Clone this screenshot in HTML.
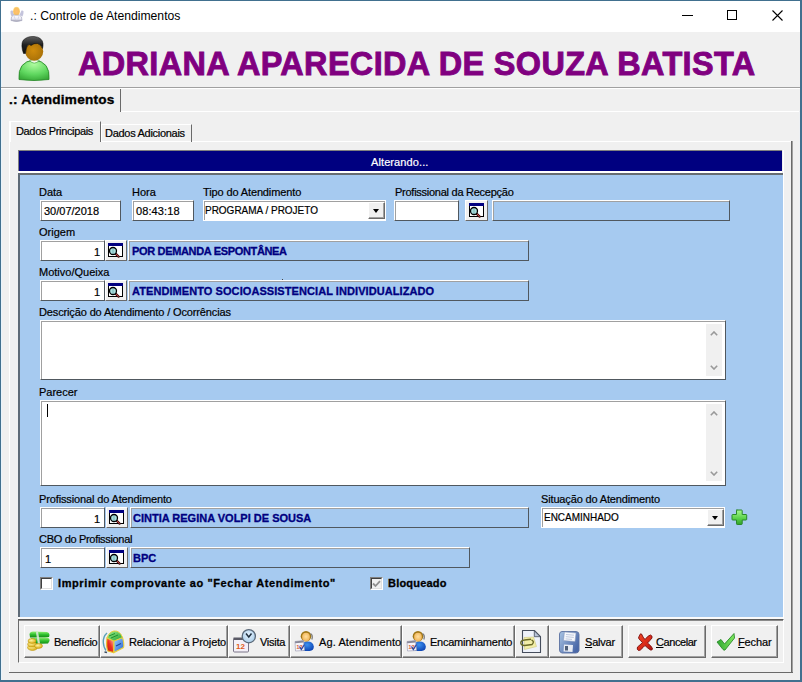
<!DOCTYPE html>
<html><head><meta charset="utf-8">
<style>
*{box-sizing:border-box;margin:0;padding:0}
html,body{width:802px;height:682px;overflow:hidden;background:#f0f0f0;font-family:"Liberation Sans",sans-serif;font-size:11px;color:#000}
.a{position:absolute}
svg{position:absolute;overflow:visible}
.t{position:absolute;white-space:nowrap;line-height:1}
.l{position:absolute;white-space:nowrap;font-size:11px;line-height:13px;color:#000;-webkit-text-stroke:0.2px currentColor}
.ed{position:absolute;background:#fff;border-top:1px solid #fff;border-left:1px solid #fff;border-right:1px solid #50585f;border-bottom:1px solid #50585f}
.ed::before{content:"";position:absolute;left:0;top:0;right:0;bottom:0;border-top:1px solid #a0a0a0;border-left:1px solid #a0a0a0}
.dp{position:absolute;background:#a6caf0;border-top:1px solid #fff;border-left:1px solid #fff;border-right:1px solid #50585f;border-bottom:1px solid #50585f}
.dp::before{content:"";position:absolute;left:0;top:0;right:0;bottom:0;border-top:1px solid #a0a0a0;border-left:1px solid #a0a0a0}
.cb{position:absolute;background:#fff;border:1px solid #fff}
.cb::before{content:"";position:absolute;left:0;top:0;right:0;bottom:0;border-top:1px solid #a0a0a0;border-left:1px solid #a0a0a0}
.bt{position:absolute;background:#f0f0f0;border-top:1px solid #fff;border-left:1px solid #fff;border-right:1px solid #6a6a6a;border-bottom:1px solid #6a6a6a}
.bb{position:absolute;background:#f0f0f0;border-top:1px solid #fff;border-left:1px solid #fff;border-right:1px solid #6a6a6a;border-bottom:1px solid #6a6a6a}
.bb::after{content:"";position:absolute;left:0;top:0;right:0;bottom:0;border-right:1px solid #a0a0a0;border-bottom:1px solid #a0a0a0}
.dt{position:absolute;font-weight:bold;color:#000080;font-size:11px;white-space:nowrap;line-height:13px;-webkit-text-stroke:0.3px #000080}
.u{text-decoration:underline}
</style></head><body>
<!-- defs -->
<svg width="0" height="0" style="left:0;top:0">
<defs>
<symbol id="mag" viewBox="0 0 17 16">
  <rect x="0.5" y="0.5" width="14" height="13" fill="#fff" stroke="#000" stroke-width="1"/>
  <rect x="0" y="0" width="15" height="3" fill="#000080"/>
  <path d="M7.6 10.6 L10.6 13.6" stroke="#401010" stroke-width="2.2" stroke-linecap="round"/>
  <path d="M7.9 10.9 L10.3 13.3" stroke="#c04040" stroke-width="1" stroke-linecap="round"/>
  <circle cx="5" cy="8" r="3.5" fill="#a8dede" stroke="#000" stroke-width="1.3"/>
  <path d="M5 5.5 V10.5" stroke="#60a0a0" stroke-width="0.6"/>
</symbol>
<symbol id="chev" viewBox="0 0 8 5">
  <path d="M0.8 4.2 L4 1 L7.2 4.2" fill="none" stroke="#999" stroke-width="1.6"/>
</symbol>
<symbol id="agent" viewBox="0 0 22 22">
  <defs>
    <radialGradient id="hf" cx="0.5" cy="0.45" r="0.6"><stop offset="0" stop-color="#ffe0a0"/><stop offset="1" stop-color="#f0b050"/></radialGradient>
    <radialGradient id="bl" cx="0.45" cy="0.35" r="0.7"><stop offset="0" stop-color="#3c90f0"/><stop offset="1" stop-color="#0a40b0"/></radialGradient>
  </defs>
  <path d="M7.5 19 Q7 12.5 12.5 11.5 Q19 11 19.8 16.5 Q20 20.5 15.5 21 L9 21 Z" fill="url(#bl)"/>
  <ellipse cx="12" cy="6.3" rx="5.3" ry="5.3" fill="#a07818"/>
  <ellipse cx="12" cy="7" rx="3.9" ry="4.2" fill="url(#hf)"/>
  <path d="M16.5 3.5 Q19.3 5.5 17.8 9.5" fill="none" stroke="#808080" stroke-width="1.3"/>
  <path d="M1 11.5 L9.5 10.5 L10.5 20.5 L1.5 21 Z" fill="#f6f4fa" stroke="#a0a0b8" stroke-width="0.7"/>
  <path d="M1 11.5 L9.5 10.5 L9.7 12.5 L1.2 13.3 Z" fill="#888898"/>
  <text x="2.2" y="18.5" font-size="6" font-family="Liberation Sans" font-weight="bold" fill="#d86040">12</text>
  <path d="M5.5 16.5 L7.3 19.5 L10.5 14.5" fill="none" stroke="#2848a0" stroke-width="1.2"/>
</symbol>
</defs>
</svg>

<!-- window border -->
<div class="a" style="left:0;top:0;width:802px;height:682px;border:1px solid #41708f;border-right-width:2px;border-bottom-width:2px"></div>
<div class="a" style="left:1px;top:1px;width:1px;height:679px;background:#e8f4fc"></div>
<!-- title bar -->
<div class="a" style="left:1px;top:1px;width:799px;height:31px;background:#fff"></div>
<div class="t" style="left:30px;top:10px;font-size:12.2px;color:#000">.: Controle de Atendimentos</div>
<svg style="left:9px;top:6px" width="16" height="17" viewBox="9 6 16 17">
  <defs><radialGradient id="th" cx="0.5" cy="0.55" r="0.6"><stop offset="0" stop-color="#ffc070"/><stop offset="0.7" stop-color="#f8c060"/><stop offset="1" stop-color="#fff0b0"/></radialGradient>
  <linearGradient id="tb" x1="0" y1="0" x2="0" y2="1"><stop offset="0" stop-color="#ffffff"/><stop offset="0.6" stop-color="#e8e8f4"/><stop offset="1" stop-color="#9898a8"/></linearGradient></defs>
  <path d="M10.5 11.5 Q11 10 12.5 10.5 L14.5 15 L11.5 16.5 Q10.3 14 10.5 11.5Z" fill="#c4c4dc"/>
  <path d="M23.5 11.5 Q23 10 21.5 10.5 L19.5 15 L22.5 16.5 Q23.7 14 23.5 11.5Z" fill="#c4c4dc"/>
  <ellipse cx="16.5" cy="11.2" rx="3.4" ry="4.4" fill="url(#th)"/>
  <path d="M11 20.5 Q10.8 16 13.5 15.2 L19.5 15.2 Q22.2 16 22 20.5 Q16.5 22.5 11 20.5Z" fill="url(#tb)" stroke="#a0a0b8" stroke-width="0.6"/>
  <path d="M14 16 L15.5 20 M19 16 L18 19" stroke="#c8c8dc" stroke-width="0.6"/>
</svg>
<!-- window controls -->
<div class="a" style="left:682px;top:15px;width:11px;height:1px;background:#000"></div>
<div class="a" style="left:727px;top:10px;width:10px;height:10px;border:1px solid #000"></div>
<svg style="left:772px;top:10px" width="11" height="11" viewBox="0 0 11 11"><path d="M0.5 0.5 L10.5 10.5 M10.5 0.5 L0.5 10.5" stroke="#000" stroke-width="1.1"/></svg>

<!-- header avatar -->
<svg style="left:10px;top:32px" width="44" height="54" viewBox="10 32 44 54">
  <defs>
    <radialGradient id="gb" cx="0.5" cy="0.2" r="0.9"><stop offset="0" stop-color="#b0fca0"/><stop offset="0.55" stop-color="#60d860"/><stop offset="1" stop-color="#30a030"/></radialGradient>
    <radialGradient id="gf" cx="0.45" cy="0.45" r="0.6"><stop offset="0" stop-color="#d08c0c"/><stop offset="1" stop-color="#a87008"/></radialGradient>
    <linearGradient id="gh" x1="0" y1="0" x2="0" y2="1"><stop offset="0" stop-color="#606060"/><stop offset="0.5" stop-color="#202020"/><stop offset="1" stop-color="#101010"/></linearGradient>
  </defs>
  <path d="M19 79.5 Q17.5 61.5 34 60 Q50.5 61.5 49 79.5 Q34 81.5 19 79.5Z" fill="url(#gb)" stroke="#2c8c2c" stroke-width="0.9"/>
  <path d="M29.5 60.3 Q34 66 39.5 60.3 Q34 59 29.5 60.3Z" fill="#f0fae8" stroke="#3a9a3a" stroke-width="0.6"/>
  <ellipse cx="34.2" cy="51.5" rx="9" ry="9.3" fill="url(#gf)"/>
  <path d="M23.5 53.5 Q20.5 45 23 40.5 Q27 36 34 36.5 Q42 37 43 43.5 Q43.2 46 42.5 48.5 Q41 44.5 37.5 43.5 Q34 43 31 45.5 Q29.5 44 28 45 Q26 47 25.5 53.5 Z" fill="url(#gh)" stroke="#000" stroke-width="0.5"/>
</svg>
<div class="t" style="left:78px;top:48px;font-size:32.4px;font-weight:bold;color:#800080;letter-spacing:0.38px;-webkit-text-stroke:0.9px #800080">ADRIANA APARECIDA DE SOUZA BATISTA</div>
<div class="a" style="left:1px;top:87px;width:799px;height:1px;background:#a0a0a0"></div>
<div class="a" style="left:1px;top:88px;width:799px;height:1px;background:#fff"></div>

<!-- outer page control -->
<div class="a" style="left:9px;top:111px;width:791px;height:562px;border-top:1px solid #fff"></div>
<div class="a" style="left:9px;top:121px;width:1px;height:552px;background:#fff"></div>
<div class="a" style="left:792px;top:141px;width:1px;height:532px;background:#a0a0a0"></div>
<div class="a" style="left:9px;top:672px;width:784px;height:1px;background:#6a6a6a"></div>
<div class="a" style="left:799px;top:111px;width:1px;height:569px;background:#eef0f3"></div>
<div class="a" style="left:2px;top:89px;width:119px;height:23px;background:#f0f0f0;border-right:1px solid #6a6a6a"></div>
<div class="t" style="left:9px;top:93px;font-size:13.6px;font-weight:bold;letter-spacing:0.22px;-webkit-text-stroke:0.35px #000">.: Atendimentos</div>

<!-- inner page control -->
<div class="a" style="left:11px;top:141px;width:781px;height:1px;background:#fff"></div>
<div class="a" style="left:101px;top:124px;width:91px;height:18px;border-left:1px solid #fff;border-top:1px solid #fff;border-right:1px solid #6a6a6a"></div>
<div class="l" style="left:105px;top:127px;letter-spacing:-0.29px">Dados Adicionais</div>
<div class="a" style="left:10px;top:121px;width:91px;height:21px;background:#f0f0f0;border-left:1px solid #fff;border-top:1px solid #fff;border-right:1px solid #6a6a6a"></div>
<div class="l" style="left:16px;top:125px;letter-spacing:-0.35px">Dados Principais</div>
<div class="a" style="left:791px;top:141px;width:1px;height:531px;background:#6a6a6a"></div>

<!-- navy bar -->
<div class="a" style="left:18px;top:150px;width:764px;height:21px;background:#000080;border-left:1px solid #808080;border-top:1px solid #808080"></div>
<div class="l" style="left:371px;top:156px;color:#fff;letter-spacing:0.1px">Alterando...</div>
<div class="a" style="left:18px;top:171px;width:764px;height:2px;background:#fff"></div>

<!-- blue panel -->
<div class="a" style="left:18px;top:173px;width:765px;height:445px;background:#a6caf0;border-left:2px solid #5e6a76;border-top:2px solid #666c72"></div>
<div class="a" style="left:18px;top:617px;width:765px;height:2px;background:#fafafa"></div>
<div class="a" style="left:783px;top:150px;width:1px;height:469px;background:#fff"></div>
<!-- row 1 -->
<div class="l" style="left:39px;top:186px">Data</div>
<div class="ed" style="left:40px;top:200px;width:81px;height:21px"></div>
<div class="l" style="left:44px;top:205px">30/07/2018</div>
<div class="l" style="left:132px;top:186px">Hora</div>
<div class="ed" style="left:132px;top:200px;width:62px;height:21px"></div>
<div class="l" style="left:136px;top:205px;letter-spacing:0.1px">08:43:18</div>
<div class="l" style="left:203px;top:186px;letter-spacing:-0.124px">Tipo do Atendimento</div>
<div class="cb" style="left:203px;top:200px;width:183px;height:21px"></div>
<div class="l" style="left:205px;top:204px;transform:scaleX(0.907);transform-origin:0 0">PROGRAMA / PROJETO</div>
<div class="bb" style="left:368px;top:202px;width:17px;height:17px"></div>
<div class="a" style="left:373px;top:209px;width:0;height:0;border-left:3.5px solid transparent;border-right:3.5px solid transparent;border-top:4px solid #000"></div>
<div class="l" style="left:395px;top:186px;letter-spacing:-0.26px">Profissional da Recepção</div>
<div class="ed" style="left:394px;top:200px;width:65px;height:21px"></div>
<div class="bt" style="left:465px;top:200px;width:23px;height:21px"></div>
<svg style="left:469px;top:203px" width="17" height="16"><use href="#mag"/></svg>
<div class="dp" style="left:492px;top:200px;width:238px;height:21px"></div>

<!-- row 2 Origem -->
<div class="l" style="left:39px;top:226px">Origem</div>
<div class="ed" style="left:40px;top:240px;width:65px;height:21px"></div>
<div class="l" style="left:94px;top:246px">1</div>
<div class="bt" style="left:105px;top:240px;width:22px;height:21px"></div>
<svg style="left:108px;top:243px" width="17" height="16"><use href="#mag"/></svg>
<div class="dp" style="left:128px;top:240px;width:401px;height:21px"></div>
<div class="dt" style="left:132px;top:245px;letter-spacing:-0.339px">POR DEMANDA ESPONTÂNEA</div>

<!-- row 3 Motivo -->
<div class="l" style="left:39px;top:266px">Motivo/Queixa</div>
<div class="a" style="left:282px;top:279px;width:1px;height:1px;background:#444"></div>
<div class="ed" style="left:40px;top:280px;width:65px;height:21px"></div>
<div class="l" style="left:94px;top:286px">1</div>
<div class="bt" style="left:105px;top:280px;width:22px;height:21px"></div>
<svg style="left:108px;top:283px" width="17" height="16"><use href="#mag"/></svg>
<div class="dp" style="left:128px;top:280px;width:401px;height:21px"></div>
<div class="dt" style="left:132px;top:285px;letter-spacing:0.073px">ATENDIMENTO SOCIOASSISTENCIAL INDIVIDUALIZADO</div>

<!-- memo 1 -->
<div class="l" style="left:39px;top:306px;letter-spacing:-0.133px">Descrição do Atendimento / Ocorrências</div>
<div class="ed" style="left:40px;top:320px;width:686px;height:60px"></div>
<div class="a" style="left:706px;top:324px;width:16px;height:52px;background:#f0f0f0"></div>
<svg style="left:710px;top:331px" width="8" height="5"><use href="#chev"/></svg>
<svg style="left:710px;top:365px;transform:scaleY(-1)" width="8" height="5"><use href="#chev"/></svg>

<!-- memo 2 -->
<div class="l" style="left:39px;top:386px">Parecer</div>
<div class="ed" style="left:40px;top:400px;width:686px;height:86px"></div>
<div class="a" style="left:706px;top:404px;width:16px;height:77px;background:#f0f0f0"></div>
<svg style="left:710px;top:411px" width="8" height="5"><use href="#chev"/></svg>
<svg style="left:710px;top:471px;transform:scaleY(-1)" width="8" height="5"><use href="#chev"/></svg>
<div class="a" style="left:47px;top:404px;width:1px;height:13px;background:#000"></div>

<!-- prof atendimento -->
<div class="l" style="left:39px;top:493px;letter-spacing:-0.132px">Profissional do Atendimento</div>
<div class="ed" style="left:40px;top:507px;width:65px;height:21px"></div>
<div class="l" style="left:94px;top:513px">1</div>
<div class="bt" style="left:106px;top:507px;width:22px;height:21px"></div>
<svg style="left:109px;top:510px" width="17" height="16"><use href="#mag"/></svg>
<div class="dp" style="left:130px;top:507px;width:399px;height:21px"></div>
<div class="dt" style="left:133px;top:512px">CINTIA REGINA VOLPI DE SOUSA</div>

<div class="l" style="left:541px;top:493px;letter-spacing:-0.15px">Situação do Atendimento</div>
<div class="cb" style="left:541px;top:507px;width:184px;height:21px"></div>
<div class="l" style="left:544px;top:511px;transform:scaleX(0.907);transform-origin:0 0">ENCAMINHADO</div>
<div class="bb" style="left:707px;top:509px;width:17px;height:17px"></div>
<div class="a" style="left:712px;top:516px;width:0;height:0;border-left:3.5px solid transparent;border-right:3.5px solid transparent;border-top:4px solid #000"></div>
<svg style="left:731px;top:509px" width="17" height="17" viewBox="0 0 17 17">
  <defs><linearGradient id="pl" x1="0" y1="0" x2="0" y2="1"><stop offset="0" stop-color="#a8f890"/><stop offset="0.6" stop-color="#58d048"/><stop offset="1" stop-color="#30a028"/></linearGradient></defs>
  <path d="M5.5 1 H10.5 Q11.2 1 11.2 1.7 V5.5 H15 Q15.7 5.5 15.7 6.2 V10.3 Q15.7 11 15 11 H11.2 V14.8 Q11.2 15.5 10.5 15.5 H6.2 Q5.5 15.5 5.5 14.8 V11 H1.7 Q1 11 1 10.3 V6.2 Q1 5.5 1.7 5.5 H5.5 V1.7 Q5.5 1 6.2 1Z" fill="url(#pl)" stroke="#2a882a" stroke-width="1"/>
</svg>

<!-- CBO -->
<div class="l" style="left:39px;top:533px;letter-spacing:-0.314px">CBO do Profissional</div>
<div class="ed" style="left:40px;top:547px;width:65px;height:21px"></div>
<div class="l" style="left:45px;top:553px">1</div>
<div class="bt" style="left:106px;top:547px;width:22px;height:21px"></div>
<svg style="left:109px;top:550px" width="17" height="16"><use href="#mag"/></svg>
<div class="dp" style="left:130px;top:547px;width:340px;height:21px"></div>
<div class="dt" style="left:133px;top:552px">BPC</div>

<!-- checkboxes -->
<div class="a" style="left:40px;top:577px;width:13px;height:13px;background:#fff;border-top:1px solid #808080;border-left:1px solid #808080;border-right:1px solid #fff;border-bottom:1px solid #fff"></div>
<div class="a" style="left:41px;top:578px;width:11px;height:11px;border-top:1px solid #404040;border-left:1px solid #404040;border-right:1px solid #e0e0e0;border-bottom:1px solid #e0e0e0"></div>
<div class="t" style="left:58px;top:578px;font-size:11px;font-weight:bold;letter-spacing:0.6px;line-height:11px;-webkit-text-stroke:0.3px #000">Imprimir comprovante ao "Fechar Atendimento"</div>
<div class="a" style="left:370px;top:577px;width:13px;height:13px;background:#f0f0f0;border-top:1px solid #808080;border-left:1px solid #808080;border-right:1px solid #fff;border-bottom:1px solid #fff"></div>
<div class="a" style="left:371px;top:578px;width:11px;height:11px;border-top:1px solid #404040;border-left:1px solid #404040;border-right:1px solid #e0e0e0;border-bottom:1px solid #e0e0e0"></div>
<svg style="left:372px;top:580px" width="9" height="8" viewBox="0 0 9 8"><path d="M1 3.5 L3.5 6 L8 1.2" fill="none" stroke="#909090" stroke-width="1.8"/></svg>
<div class="t" style="left:388px;top:578px;font-size:11px;font-weight:bold;line-height:11px;letter-spacing:0.2px;-webkit-text-stroke:0.3px #000">Bloqueado</div>
<!-- button bar -->
<div class="a" style="left:18px;top:619px;width:766px;height:44px;border-left:1px solid #6a6a6a;border-top:1px solid #5a5a5a;border-right:1px solid #fff;border-bottom:1px solid #fff"></div>
<div class="a" style="left:19px;top:620px;width:764px;height:1px;background:#8a8a8a"></div>

<!-- 1 Beneficio -->
<div class="bb" style="left:24px;top:625px;width:76px;height:33px"></div>
<svg style="left:26px;top:629px" width="25" height="24" viewBox="26 629 25 24">
  <defs>
    <linearGradient id="mg" x1="0" y1="0" x2="0" y2="1"><stop offset="0" stop-color="#90f070"/><stop offset="0.5" stop-color="#30c030"/><stop offset="1" stop-color="#108a10"/></linearGradient>
    <radialGradient id="cg" cx="0.4" cy="0.35" r="0.7"><stop offset="0" stop-color="#fff4a0"/><stop offset="1" stop-color="#d8a810"/></radialGradient>
  </defs>
  <path d="M29.5 634 Q30 631.5 33 631.5 L47 632 Q49.5 632.5 49.5 635 L49 637 L45 637.5 L30 637.5 Z" fill="url(#mg)"/>
  <path d="M31 638 L47 637.5 Q50 638 49.5 641 L48 643.5 L33 644 Q30.5 643.5 31 641 Z" fill="url(#mg)"/>
  <path d="M37 632 L39 644" stroke="#d8e8d8" stroke-width="2.2" opacity="0.9"/>
  <ellipse cx="32.5" cy="647.5" rx="5" ry="3" fill="url(#cg)" stroke="#b89000" stroke-width="0.5"/>
  <ellipse cx="32" cy="644.3" rx="4.3" ry="2.6" fill="url(#cg)" stroke="#b89000" stroke-width="0.5"/>
  <ellipse cx="32" cy="641" rx="4" ry="2.4" fill="url(#cg)" stroke="#b89000" stroke-width="0.5"/>
  <ellipse cx="38.5" cy="646" rx="4" ry="2.4" fill="url(#cg)" stroke="#b89000" stroke-width="0.5"/>
</svg>
<div class="l" style="left:54px;top:636px;letter-spacing:-0.275px">Benefício</div>

<!-- 2 Relacionar -->
<div class="bb" style="left:100px;top:625px;width:128px;height:33px"></div>
<svg style="left:101px;top:629px" width="25" height="25" viewBox="101 629 25 25">
  <defs>
    <linearGradient id="rg" x1="1" y1="0" x2="0" y2="1"><stop offset="0" stop-color="#ffd0c0"/><stop offset="0.5" stop-color="#f03020"/><stop offset="1" stop-color="#c01010"/></linearGradient>
    <linearGradient id="gg2" x1="0" y1="0" x2="1" y2="1"><stop offset="0" stop-color="#a0f090"/><stop offset="1" stop-color="#20a030"/></linearGradient>
    <linearGradient id="bg2" x1="0" y1="0" x2="1" y2="1"><stop offset="0" stop-color="#a0d0ff"/><stop offset="1" stop-color="#2060d0"/></linearGradient>
  </defs>
  <path d="M107 633 Q103 636.5 103.3 642.5 Q103.8 648 106 650.5" fill="none" stroke="#5aa0b8" stroke-width="1.4"/>
  <path d="M107 638 Q106 648 108 651 L113.5 652.5 L114 641 Z" fill="url(#rg)" stroke="#e8c020" stroke-width="1.1"/>
  <path d="M114 641 L122.5 637.5 Q124.5 644 123.5 647.5 L114 652.5 Z" fill="url(#bg2)" stroke="#e8d040" stroke-width="1.1"/>
  <path d="M107 638 Q109 632 114 631 Q120 630.5 122.5 637.5 L114 641 Z" fill="url(#gg2)" stroke="#e8d040" stroke-width="1"/>
  <path d="M109 636 L115 633.5 M111 638 L118 635" stroke="#188a28" stroke-width="0.9"/>
  <path d="M116 646 L121 643.5" stroke="#18489a" stroke-width="1.2"/>
  <path d="M104.5 652 L107 652.5" stroke="#3a4a60" stroke-width="1.5"/>
</svg>
<div class="l" style="left:129px;top:636px;letter-spacing:-0.13px">Relacionar à Projeto</div>

<!-- 3 Visita -->
<div class="bb" style="left:228px;top:625px;width:62px;height:33px"></div>
<svg style="left:231px;top:628px" width="28" height="26" viewBox="231 628 28 26">
  <defs><radialGradient id="ck" cx="0.5" cy="0.4" r="0.6"><stop offset="0" stop-color="#e8f4ff"/><stop offset="1" stop-color="#a8cce8"/></radialGradient></defs>
  <rect x="233.5" y="638.5" width="15" height="13.5" rx="1" fill="#f4f0f8" stroke="#7a7488" stroke-width="1"/>
  <rect x="233.5" y="637.5" width="15" height="2.5" fill="#5a5a66"/>
  <text x="236" y="649" font-size="8" font-family="Liberation Sans" font-weight="bold" fill="#e05a20">12</text>
  <circle cx="248.8" cy="636.2" r="6.6" fill="url(#ck)" stroke="#5a6878" stroke-width="1.3"/>
  <path d="M246 633.5 L248.8 637 L251.5 633.5" fill="none" stroke="#203040" stroke-width="1.5"/>
</svg>
<div class="l" style="left:260px;top:636px;letter-spacing:-0.280px">Visita</div>

<!-- 4 Ag -->
<div class="bb" style="left:290px;top:625px;width:112px;height:33px"></div>
<svg style="left:294px;top:630px" width="22" height="22" viewBox="0 0 22 22"><use href="#agent"/></svg>
<div class="l" style="left:319px;top:636px;letter-spacing:0.107px">Ag. Atendimento</div>

<!-- 5 Encaminhamento -->
<div class="bb" style="left:402px;top:625px;width:113px;height:33px"></div>
<svg style="left:406px;top:630px" width="22" height="22" viewBox="0 0 22 22"><use href="#agent"/></svg>
<div class="l" style="left:430px;top:636px;letter-spacing:-0.243px">Encaminhamento</div>

<!-- 6 doc -->
<div class="bb" style="left:515px;top:625px;width:34px;height:33px"></div>
<svg style="left:519px;top:629px" width="24" height="25" viewBox="519 629 24 25">
  <path d="M522.5 630.5 H534.3 L540.5 636.7 V652.5 H522.5 Z" fill="#eef2fa" stroke="#454d5c" stroke-width="1.1" stroke-linejoin="round"/>
  <path d="M534.3 630.8 V636.7 H540.2 Z" fill="#b8c4d8" stroke="#454d5c" stroke-width="0.8"/>
  <path d="M524 637.5 L533.5 637 L536.5 646.5 L524.5 649.5 Z" fill="#f2eea8" stroke="#c8c070" stroke-width="0.5"/>
  <path d="M531.5 639.8 Q535 641.5 532 644.5 L524.5 645.5 Q520.5 645.3 520.8 642.5 Q521.2 640.2 524.5 640 L531 639.3" fill="none" stroke="#6a6a28" stroke-width="1.4"/>
</svg>

<!-- 7 Salvar -->
<div class="bb" style="left:549px;top:625px;width:74px;height:33px"></div>
<svg style="left:558px;top:630px" width="23" height="24" viewBox="558 630 23 24">
  <defs><linearGradient id="fl" x1="0" y1="0" x2="1" y2="0.6"><stop offset="0" stop-color="#a8c4e4"/><stop offset="0.5" stop-color="#7894c4"/><stop offset="1" stop-color="#4a68a8"/></linearGradient></defs>
  <path d="M562 631.5 H576.5 Q579 632 579 634.5 V650.5 Q578.5 653 576 653 H562 Q559.5 652.5 559.5 650 V634 Q559.8 631.5 562 631.5Z" fill="url(#fl)" stroke="#5a70a0" stroke-width="0.9"/>
  <path d="M564.5 632 L576 633 L575 641.5 L563.5 640.5 Z" fill="#f6f8fc" stroke="#8898b8" stroke-width="0.5"/>
  <path d="M566 634.5 L574 635.2 M565.8 636.7 L573.8 637.4 M565.6 638.9 L572 639.4" stroke="#98a8c8" stroke-width="0.6"/>
  <path d="M564 644.5 L573 645 L572.5 652 L563.5 651.5 Z" fill="#e8ecf4"/>
  <rect x="565" y="646" width="3" height="4.5" fill="#50607a"/>
</svg>
<div class="l" style="left:585px;top:636px;letter-spacing:-0.2px"><span class="u">S</span>alvar</div>

<!-- 8 Cancelar -->
<div class="bb" style="left:628px;top:625px;width:78px;height:33px"></div>
<svg style="left:634px;top:631px" width="21" height="22" viewBox="634 631 21 22">
  <defs><linearGradient id="xg" x1="0" y1="0" x2="1" y2="1"><stop offset="0" stop-color="#f04a28"/><stop offset="0.6" stop-color="#d82818"/><stop offset="1" stop-color="#a81010"/></linearGradient></defs>
  <path d="M640.5 633.8 Q639 636 638.5 638 Q640 640.5 642.5 642.5 Q640 645 637.5 647 Q636.5 649.5 638.5 650.5 Q640 651 643 647.5 L645 645.5 Q648 648.5 650.5 650 Q652.5 650.5 652.5 648.5 Q651.5 646 647.5 643 Q650 640.5 652 638 Q652.5 635.5 650.5 635 Q648.5 635 645 639.5 Q643 637.5 641.5 634 Z" fill="url(#xg)" stroke="#7a0c0c" stroke-width="0.9" stroke-linejoin="round"/>
</svg>
<div class="l" style="left:656px;top:636px;letter-spacing:-0.43px"><span class="u">C</span>ancelar</div>

<!-- 9 Fechar -->
<div class="bb" style="left:711px;top:625px;width:67px;height:33px"></div>
<svg style="left:715px;top:631px" width="22" height="21" viewBox="715 631 22 21">
  <defs><linearGradient id="cgk" x1="0" y1="0" x2="1" y2="0"><stop offset="0" stop-color="#30a830"/><stop offset="1" stop-color="#80e860"/></linearGradient></defs>
  <path d="M717 642 L721 639.5 L724.5 644 L734 633.5 L734.5 638 L725 650 Q724 650.5 723 649.5 Z" fill="url(#cgk)" stroke="#2a8a2a" stroke-width="0.9" stroke-linejoin="round"/>
</svg>
<div class="l" style="left:738px;top:636px;letter-spacing:-0.12px"><span class="u">F</span>echar</div>

</body></html>
